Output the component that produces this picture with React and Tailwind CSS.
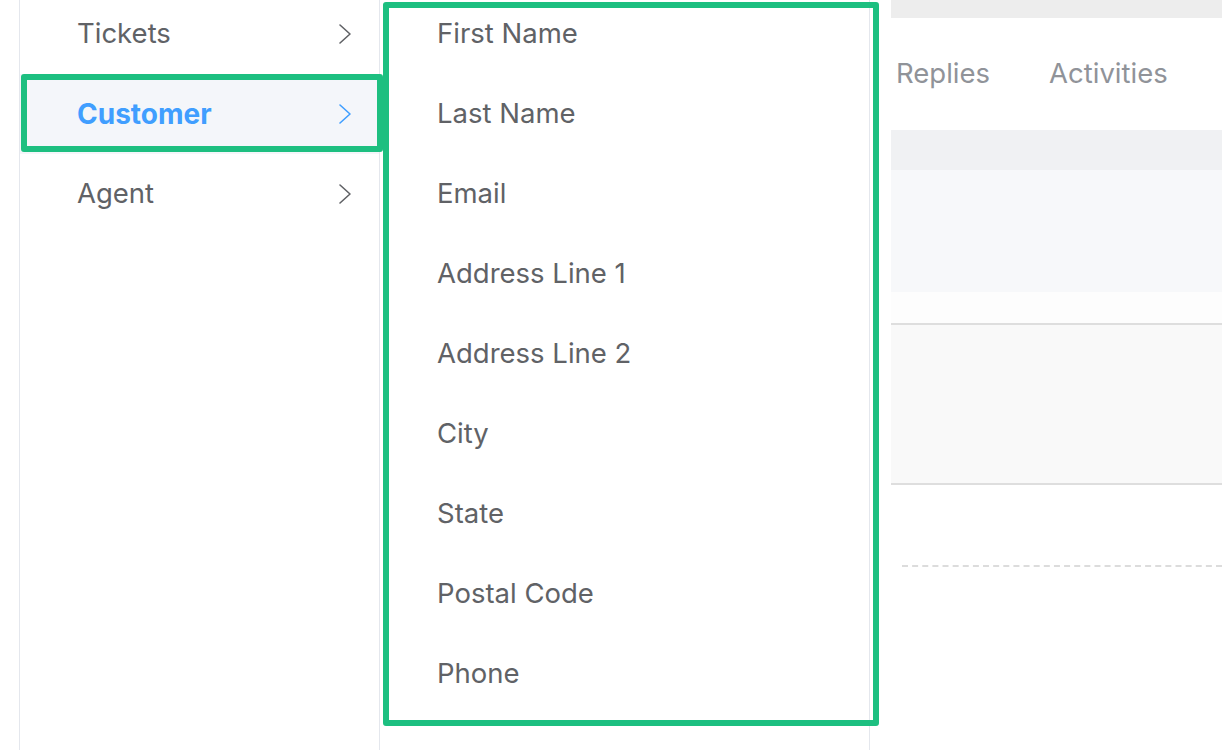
const groups = [
  { label: 'Tickets' },
  { label: 'Customer', active: true },
  { label: 'Agent' },
];

const fields = [
  'First Name',
  'Last Name',
  'Email',
  'Address Line 1',
  'Address Line 2',
  'City',
  'State',
  'Postal Code',
  'Phone',
];

// thin chevron like element-ui's arrow-right
const Chevron = ({ className }) => (
  <svg width="14" height="22" viewBox="0 0 14 22" fill="none" className={className}>
    <polyline points="2,2 12,11 2,20" stroke="currentColor" strokeWidth="1.6" strokeLinecap="round" strokeLinejoin="round" />
  </svg>
);

const App = () => {
  return (
    <div
      className="relative flex h-[750px] w-[1222px] overflow-hidden bg-white text-[#606266]"
      style={{ fontFamily: 'Inter, "Liberation Sans", sans-serif' }}
    >
      {/* left gutter */}
      <div className="w-[20px] shrink-0 border-r border-[#e4e7ed]" />

      {/* first cascader column */}
      <div className="w-[360px] shrink-0 border-r border-[#e4e7ed]">
        <ul className="-mt-[6px]">
          {groups.map((g) => (
            <li
              key={g.label}
              className={`flex h-[80px] items-center justify-between pl-[57px] pr-[27px] ${
                g.active ? 'bg-[#f4f6fa] text-[28px] font-bold text-[#409eff]' : 'text-[27.5px]'
              }`}
            >
              <span>{g.label}</span>
              <Chevron className={g.active ? 'text-[#409eff]' : 'text-[#606266]'} />
            </li>
          ))}
        </ul>
      </div>

      {/* second cascader column */}
      <div className="w-[490px] shrink-0 border-r border-[#e4e7ed]">
        <ul className="-mt-[6px]">
          {fields.map((f) => (
            <li key={f} className="flex h-[80px] items-center pl-[57px] text-[27.5px]">
              {f}
            </li>
          ))}
        </ul>
      </div>

      <div className="w-[21px] shrink-0 bg-white" />

      {/* page behind the dropdown */}
      <div className="flex flex-1 flex-col shadow-[inset_10px_0_12px_-8px_rgba(0,0,0,0.12)]">
        <div className="h-[18px] bg-[#ededed]" />
        <div className="flex h-[112px] items-center gap-[59px] bg-white pl-[5px] text-[27.5px] text-[#909399]">
          <span>Replies</span>
          <span>Activities</span>
        </div>
        <div className="h-[40px] bg-[#f0f1f3]" />
        <div className="h-[122px] bg-[#f7f8fa]" />
        <div className="h-[31px] bg-[#fdfdfd]" />
        <div className="h-[162px] border-y-2 border-[#dedede] bg-[#f9f9f9]" />
        <div className="flex-1 bg-white pt-[80px] pl-[11px]">
          <div className="border-t-2 border-dashed border-[#dcdcdc]" />
        </div>
      </div>

      {/* annotation outlines */}
      <div className="pointer-events-none absolute left-[21px] top-[74px] h-[78px] w-[362px] rounded-[3px] border-[6px] border-[#1dbf80]" />
      <div className="pointer-events-none absolute left-[383px] top-[2px] h-[724px] w-[496px] rounded-[3px] border-[6px] border-[#1dbf80]" />
    </div>
  );
};

export default App;
